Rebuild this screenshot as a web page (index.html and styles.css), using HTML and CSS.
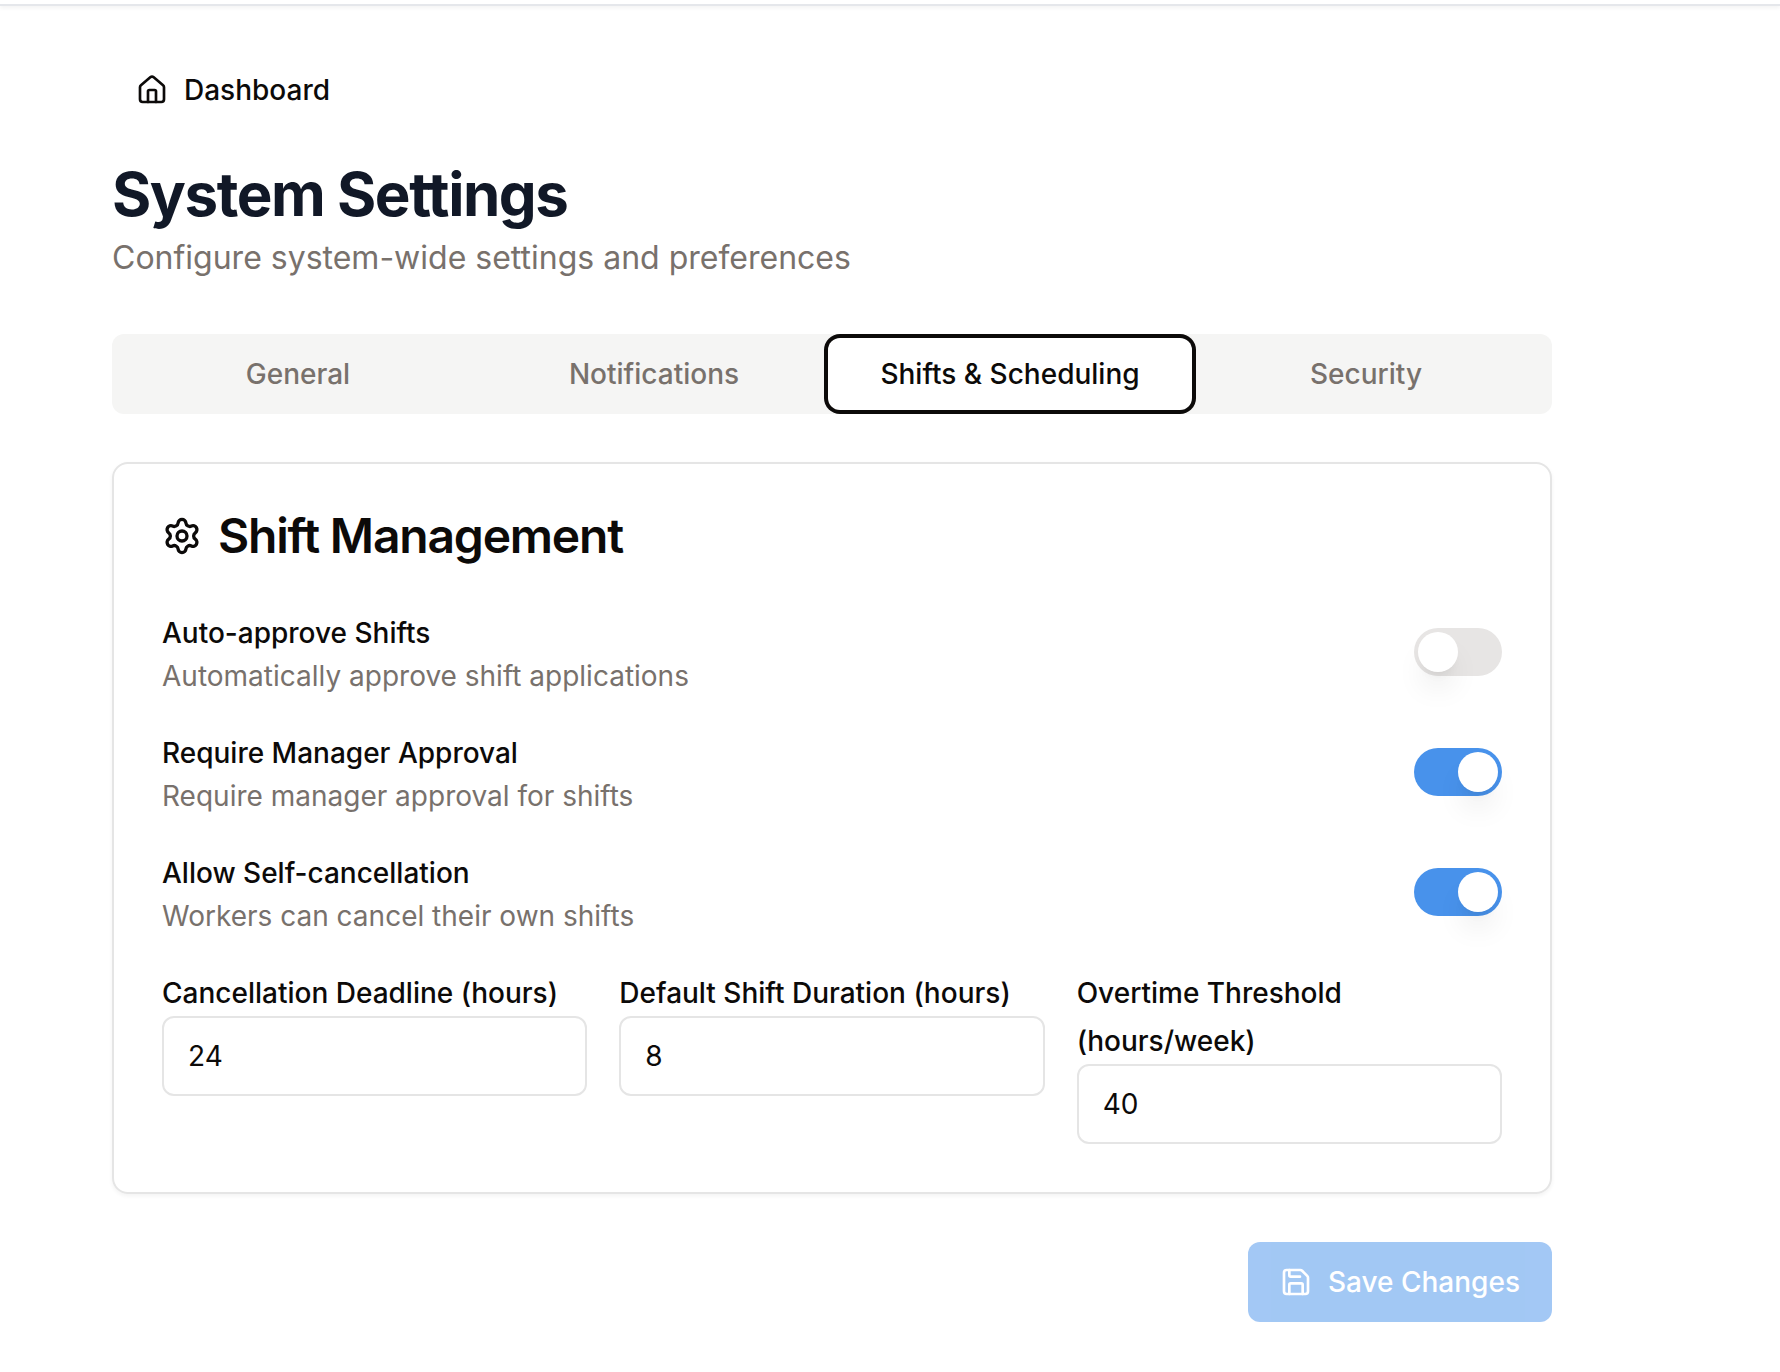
FILE: index.html
```html
<!DOCTYPE html>
<html lang="en">
<head>
<meta charset="utf-8">
<title>System Settings</title>
<link rel="stylesheet" href="styles.css">
</head>
<body>
<header class="topbar"></header>
<main class="page">
  <a class="back-link">
    <svg class="icon" viewBox="0 0 24 24"><path d="M15 21v-8a1 1 0 0 0-1-1h-4a1 1 0 0 0-1 1v8"/><path d="M3 10a2 2 0 0 1 .709-1.528l7-5.999a2 2 0 0 1 2.582 0l7 5.999A2 2 0 0 1 21 10v9a2 2 0 0 1-2 2H5a2 2 0 0 1-2-2z"/></svg>
    <span>Dashboard</span>
  </a>
  <div class="heading">
    <h1 class="title">System Settings</h1>
    <p class="subtitle">Configure system-wide settings and preferences</p>
  </div>
  <div class="tabs" role="tablist">
    <button class="tab" role="tab">General</button>
    <button class="tab" role="tab">Notifications</button>
    <button class="tab tab-active" role="tab">Shifts &amp; Scheduling</button>
    <button class="tab" role="tab">Security</button>
  </div>
  <section class="card">
    <h2 class="card-title">
      <svg class="icon icon-lg" viewBox="0 0 24 24"><path d="M9.671 4.136a2.34 2.34 0 0 1 4.659 0 2.34 2.34 0 0 0 3.319 1.915 2.34 2.34 0 0 1 2.33 4.033 2.34 2.34 0 0 0 0 3.831 2.34 2.34 0 0 1-2.33 4.033 2.34 2.34 0 0 0-3.319 1.915 2.34 2.34 0 0 1-4.659 0 2.34 2.34 0 0 0-3.32-1.915 2.34 2.34 0 0 1-2.33-4.033 2.34 2.34 0 0 0 0-3.831A2.34 2.34 0 0 1 6.35 6.051a2.34 2.34 0 0 0 3.319-1.915"/><circle cx="12" cy="12" r="3"/></svg>
      <span>Shift Management</span>
    </h2>
    <div class="settings">
      <div class="setting">
        <div><label class="label">Auto-approve Shifts</label><p class="hint">Automatically approve shift applications</p></div>
        <button class="switch" role="switch" aria-checked="false"><span class="thumb"></span></button>
      </div>
      <div class="setting">
        <div><label class="label">Require Manager Approval</label><p class="hint">Require manager approval for shifts</p></div>
        <button class="switch switch-on" role="switch" aria-checked="true"><span class="thumb"></span></button>
      </div>
      <div class="setting">
        <div><label class="label">Allow Self-cancellation</label><p class="hint">Workers can cancel their own shifts</p></div>
        <button class="switch switch-on" role="switch" aria-checked="true"><span class="thumb"></span></button>
      </div>
      <div class="fields">
        <div><label class="label" for="deadline">Cancellation Deadline (hours)</label><input class="input" id="deadline" value="24"></div>
        <div><label class="label" for="duration">Default Shift Duration (hours)</label><input class="input" id="duration" value="8"></div>
        <div><label class="label" for="overtime">Overtime Threshold (hours/week)</label><input class="input" id="overtime" value="40"></div>
      </div>
    </div>
  </section>
  <div class="actions">
    <button class="save" disabled>
      <svg class="icon" viewBox="0 0 24 24"><path d="M15.2 3a2 2 0 0 1 1.4.6l3.8 3.8a2 2 0 0 1 .6 1.4V19a2 2 0 0 1-2 2H5a2 2 0 0 1-2-2V5a2 2 0 0 1 2-2z"/><path d="M17 21v-7a1 1 0 0 0-1-1H8a1 1 0 0 0-1 1v7"/><path d="M7 3v4a1 1 0 0 0 1 1h7"/></svg>
      <span>Save Changes</span>
    </button>
  </div>
</main>
</body>
</html>
```
FILE: styles.css
```css
* { box-sizing: border-box; margin: 0; padding: 0; }
body {
  background: #fff;
  color: #0c0a09;
  font-family: Inter, "Liberation Sans", sans-serif;
  font-size: 32px;
  line-height: 48px;
  -webkit-font-smoothing: antialiased;
}
button, input { font: inherit; letter-spacing: inherit; color: inherit; border: 0; }
.topbar { height: 6px; border-bottom: 2px solid #e5e7eb; box-shadow: 0 2px 4px rgba(0, 0, 0, 0.05); }
.page { width: 1440px; margin: 48px 0 0 112px; }
.icon { width: 32px; height: 32px; flex: none; fill: none; stroke: currentColor; stroke-width: 2; stroke-linecap: round; stroke-linejoin: round; }
.icon-lg { width: 40px; height: 40px; }
.back-link { display: inline-flex; align-items: center; gap: 16px; height: 72px; padding: 0 24px; font-size: 28px; font-weight: 500; vertical-align: top; }
.heading { margin-top: 32px; }
.title { font-size: 60px; line-height: 72px; font-weight: 700; letter-spacing: -0.024em; color: #111827; }
.subtitle { line-height: 56px; color: #78716c; }
.tabs { display: grid; grid-template-columns: repeat(4, 1fr); height: 80px; margin-top: 48px; padding: 8px; border-radius: 12px; background: #f5f5f4; }
.tab { border-radius: 8px; background: transparent; color: #78716c; font-size: 28px; line-height: 40px; font-weight: 500; }
.tab-active { background: #fff; color: #0c0a09; box-shadow: 0 0 0 4px #fff, 0 0 0 8px #0c0a09; }
.card { margin-top: 48px; padding: 48px; border: 2px solid #e5e5e5; border-radius: 16px; box-shadow: 0 2px 4px rgba(0, 0, 0, 0.05); }
.card-title { display: flex; align-items: center; gap: 16px; font-size: 48px; line-height: 48px; font-weight: 600; letter-spacing: -0.025em; }
.settings { display: flex; flex-direction: column; gap: 32px; margin-top: 48px; }
.setting { display: flex; align-items: center; justify-content: space-between; height: 88px; }
.label { display: block; padding-top: 1px; margin-bottom: -1px; font-size: 28px; font-weight: 500; }
.hint { font-size: 28px; line-height: 40px; color: #78716c; }
.switch { display: flex; width: 88px; height: 48px; padding: 4px; border-radius: 24px; background: #e7e5e4; }
.switch-on { justify-content: flex-end; background: #4892eb; }
.thumb { width: 40px; height: 40px; border-radius: 50%; background: #fff; box-shadow: 0 20px 30px -6px rgba(0, 0, 0, 0.1), 0 8px 12px -8px rgba(0, 0, 0, 0.1); }
.fields { display: grid; grid-template-columns: repeat(3, 1fr); gap: 32px; align-items: start; }
.input { display: block; width: 100%; height: 80px; padding: 0 24px; border: 2px solid #e5e5e5; border-radius: 12px; background: #fff; font-size: 28px; }
.actions { display: flex; justify-content: flex-end; margin-top: 48px; }
.save { display: flex; align-items: center; gap: 16px; height: 80px; padding: 0 32px; border-radius: 12px; background: #4892eb; color: #fff; font-size: 28px; font-weight: 500; opacity: 0.5; }
```
